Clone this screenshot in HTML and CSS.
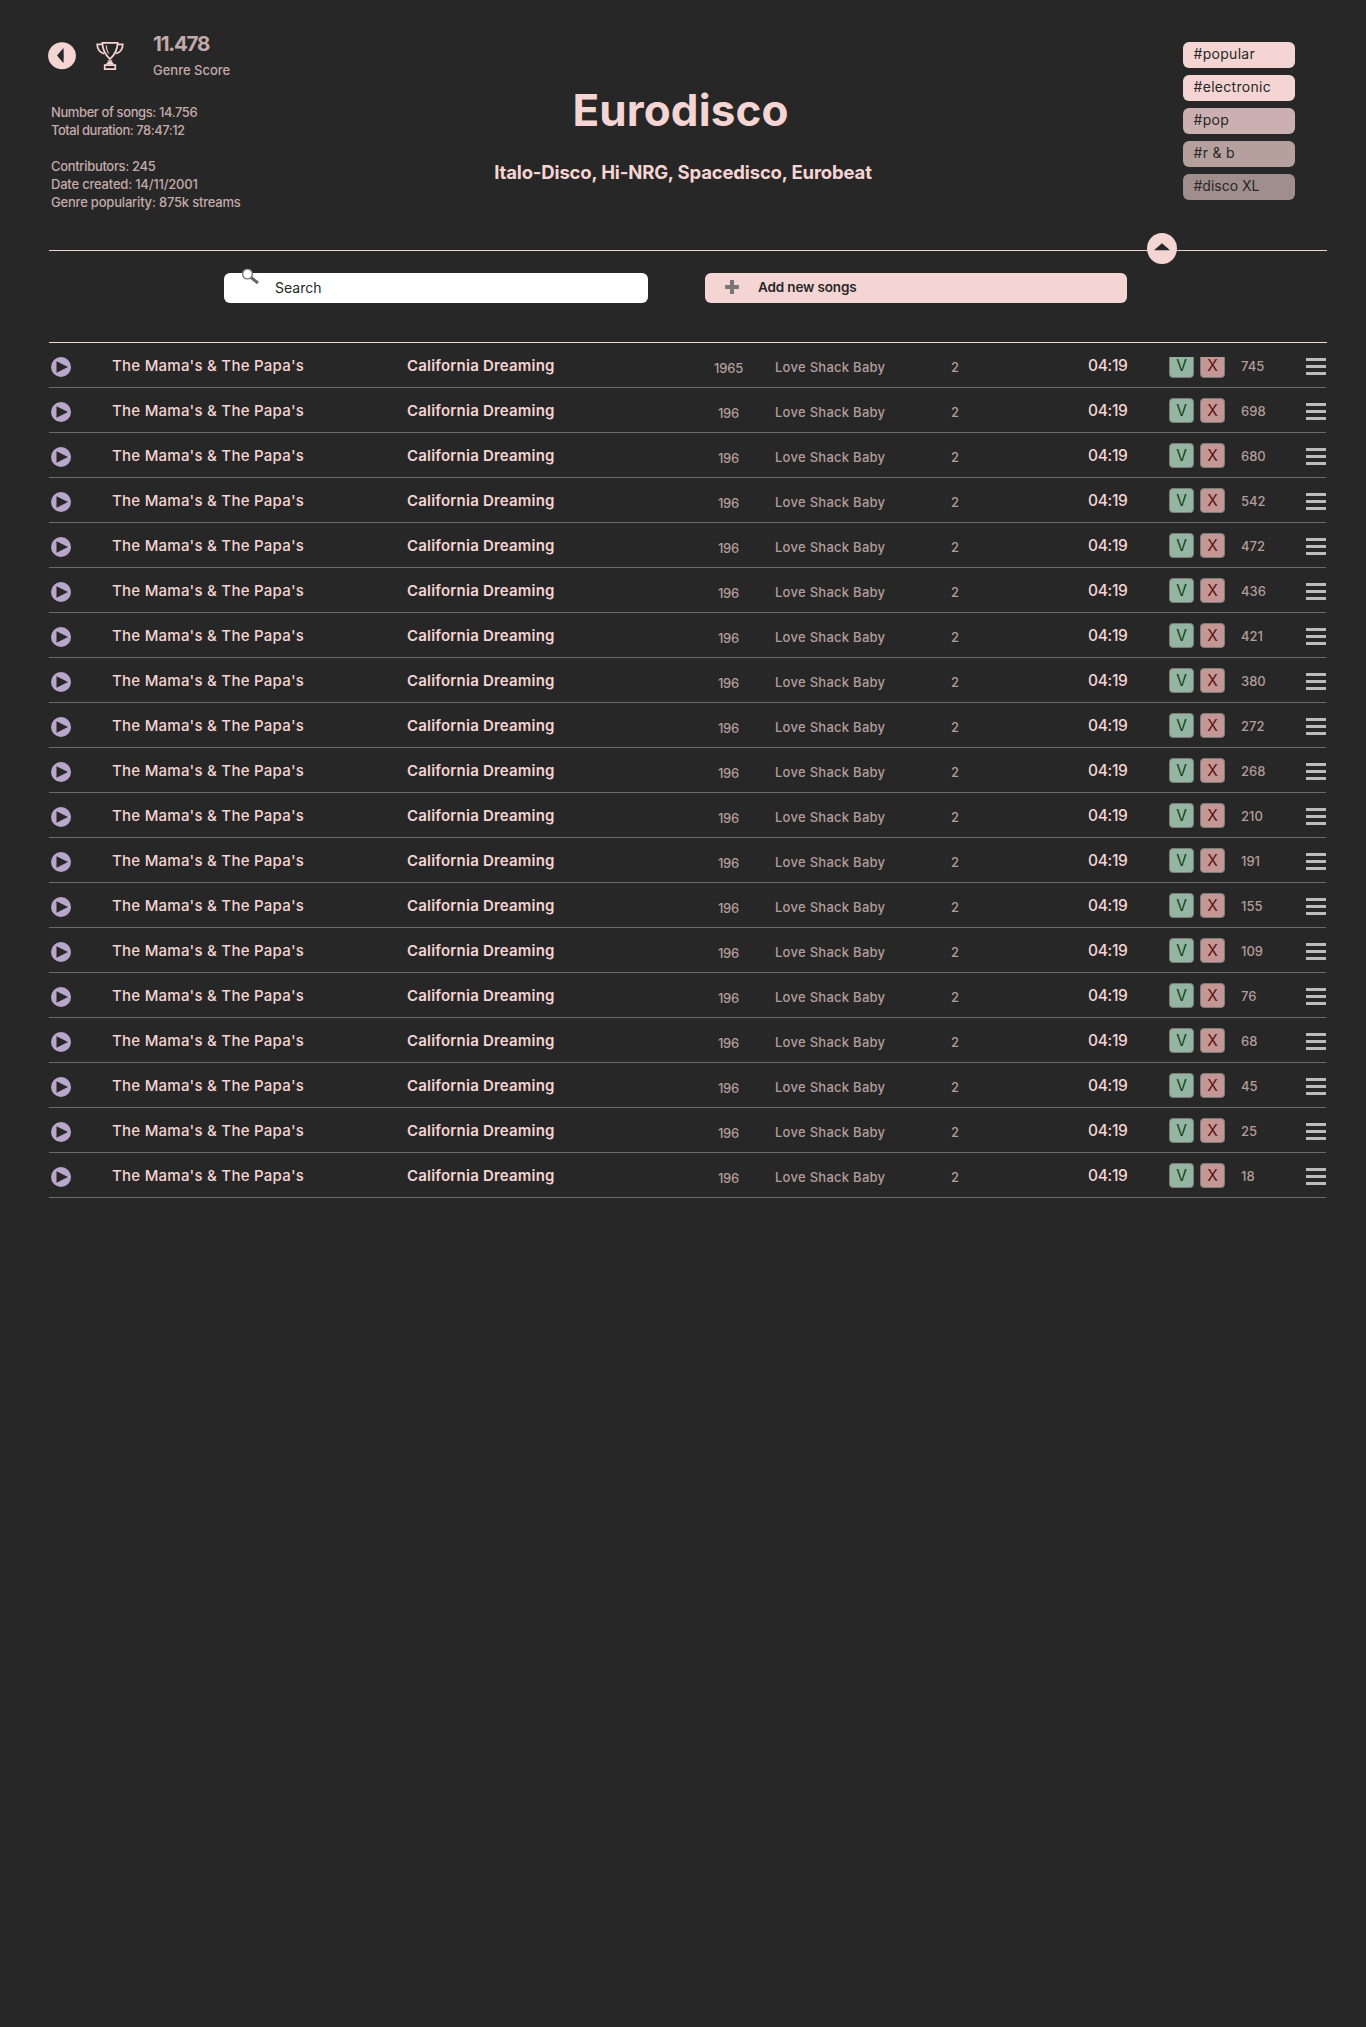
FILE: index.html
```html
<!DOCTYPE html>
<html lang="en">
<head>
<meta charset="utf-8">
<title>Eurodisco</title>
<link rel="stylesheet" href="styles.css">
</head>
<body>
<header class="hero">
  <div class="hero-info">
    <div class="hero-top">
      <svg class="back" viewBox="0 0 28 28"><ellipse cx="14" cy="13.700" rx="13.900" ry="13.500" fill="#f5d5d3"/><path d="M9 13.500 15.500 6q.5 7.500 0 15.300Z" fill="#272727"/></svg>
      <svg class="trophy" viewBox="0 0 28 30" fill="none" stroke="#f5d5d3" stroke-width="1.700"><path d="M6.300 1.900H21.700Q21.300 11.500 14 18.200Q6.700 11.500 6.300 1.900Z"/><path d="M6.500 3.400H1.200Q1.400 10.500 8.300 12.800M21.500 3.400H26.800Q26.600 10.500 19.700 12.800"/><path d="M10.200 4.500Q10.300 9 12.600 12.500" stroke-width="1.100"/><path d="M11.800 20h4.400" stroke-width="1.500"/><path d="M8.600 23.500Q11 23 12 20.800h4Q17 23 19.400 23.500Z" fill="#f5d5d3" stroke="none"/><path d="M8.700 24.100h10.600v4.100H8.700Z"/></svg>
      <div class="score"><strong class="score-value">11.478</strong><span class="score-label">Genre Score</span></div>
    </div>
    <div class="facts">
      <p class="songs-total">Number of songs: 14.756</p>
      <p class="duration">Total duration: 78:47:12</p>
      <p class="contributors">Contributors: 245</p>
      <p class="created">Date created: 14/11/2001</p>
      <p class="popularity">Genre popularity: 875k streams</p>
    </div>
  </div>
  <div class="hero-title">
    <h1>Eurodisco</h1>
    <h2>Italo-Disco, Hi-NRG, Spacedisco, Eurobeat</h2>
  </div>
  <nav class="tags">
    <a class="tag">#popular</a>
    <a class="tag">#electronic</a>
    <a class="tag tag-pop">#pop</a>
    <a class="tag tag-rnb">#r &amp; b</a>
    <a class="tag tag-disco">#disco XL</a>
  </nav>
  <svg class="collapse" viewBox="0 0 30 31"><ellipse cx="15" cy="15.500" rx="15" ry="15.500" fill="#f5d5d3"/><path d="M7 17.200 15 10.200 23 17.200Z" fill="#272727"/></svg>
</header>
<section class="tools">
  <label class="box search"><svg class="lens" viewBox="0 0 18 18"><path d="M9 9.500 16 15" stroke="#666" stroke-width="3"/><circle cx="5.500" cy="6" r="4.900" fill="#fff" stroke="#777" stroke-width="1.400"/></svg><span>Search</span></label>
  <button class="box add"><svg class="plus" viewBox="0 0 14 14"><path d="M7 0v14M0 7h14" stroke="#777" stroke-width="4"/></svg><span>Add new songs</span></button>
</section>
<main class="songs" id="songs"></main>
<script src="songs.js"></script>
</body>
</html>
```
FILE: songs.js
```js
const votes = [745, 698, 680, 542, 472, 436, 421, 380, 272, 268, 210, 191, 155, 109, 76, 68, 45, 25, 18];

document.getElementById("songs").innerHTML = votes.map((count, i) => `
  <article class="song">
    <svg class="play" viewBox="0 0 20 20"><circle cx="10" cy="10" r="10" fill="#b9a7cb"/><path d="M5.500 4.200V15.800L17 10Z" fill="#272727"/></svg>
    <span class="artist">The Mama's &amp; The Papa's</span>
    <span class="title">California Dreaming</span>
    <span class="year">${i ? "196" : "1965"}</span>
    <span class="label">Love Shack Baby</span>
    <span class="plays">2</span>
    <span class="time">04:19</span>
    <div class="vote"><b class="btn up">V</b><b class="btn down">X</b></div>
    <span class="count">${count}</span>
    <div class="menu"><i></i><i></i><i></i></div>
  </article>`).join("");
```
FILE: styles.css
```css
* { box-sizing: border-box; }
body {
  margin: 0;
  min-height: 2027px;
  background: #272727;
  color: #f5d5d3;
  font-family: Inter, "Liberation Sans", sans-serif;
}
h1, h2, p { margin: 0; }
.hero {
  position: relative;
  display: grid;
  grid-template-columns: 425px 418px 1fr;
  height: 251px;
  margin: 0 39px 0 49px;
  border-bottom: 1px solid #f5d5d3;
}
.hero-info { color: #c4abaa; font-weight: 500; }
.hero-top { display: flex; height: 100px; margin-left: -1px; }
.back { width: 28px; height: 28px; margin-top: 42px; }
.trophy { width: 28px; height: 30px; margin: 41px 0 0 20px; }
.score { display: flex; flex-direction: column; align-items: flex-start; margin: 32px 0 0 29px; }
.score-value { font-size: 20.500px; line-height: 24px; letter-spacing: -1.200px; }
.score-label { margin-top: 5px; font-size: 13px; line-height: 18px; }
.facts { padding: 3px 0 0 2px; font-size: 13px; line-height: 18px; white-space: nowrap; }
.songs-total { letter-spacing: -0.400px; }
.duration { letter-spacing: -0.480px; }
.contributors { margin-top: 18px; letter-spacing: -0.320px; }
.created, .popularity { letter-spacing: -0.200px; }
.hero-title { display: flex; flex-direction: column; align-items: center; white-space: nowrap; padding-top: 84px; }
h1 { padding-right: 5px; font-size: 44px; line-height: 52px; font-weight: 700; letter-spacing: 0.100px; }
h2 { margin-top: 24px; font-size: 18.500px; line-height: 24px; font-weight: 700; letter-spacing: -0.160px; }
.tags { display: flex; flex-direction: column; gap: 7px; padding: 42px 0 0 291px; }
.tag {
  width: 112px;
  height: 26px;
  padding-left: 10.500px;
  border-radius: 6px;
  background: #f5d5d3;
  color: #272727;
  font-size: 14px;
  line-height: 24px;
  letter-spacing: 0.300px;
}
.tag-pop { background: #ccb0b1; }
.tag-rnb { background: #b5a09e; }
.tag-disco { background: #a08e8d; letter-spacing: 0; }
.collapse { position: absolute; left: 1098px; top: 233px; width: 30px; height: 31px; }
.tools { display: flex; gap: 57px; padding: 22px 0 0 224px; height: 91px; }
.box {
  display: flex;
  align-items: center;
  height: 30px;
  border: 0;
  border-radius: 6px;
  color: #272727;
  font-family: inherit;
  font-size: 14px;
}
.box span { margin-top: -2px; }
.search { width: 424px; background: #fff; }
.lens { width: 18px; height: 18px; margin: -23px 15px 0 18px; }
.add { width: 422px; padding: 0; background: #f5d5d3; font-size: 13.500px; font-weight: 600; letter-spacing: -0.150px; }
.plus { width: 14px; height: 14px; margin: -2px 19px 0 20px; }
.songs { margin: 0 39px 0 49px; border-top: 1px solid #f8d8cd; }
.song {
  display: grid;
  grid-template-columns: 63px 295px 285px 83px 175px 138px 81px 72px 65px 20px;
  height: 45px;
  margin-right: 1px;
  border-bottom: 1px solid #6b6b6b;
}
.song > span { padding-top: 14px; line-height: 18px; white-space: nowrap; }
.play { width: 20px; height: 20px; margin: 14px 0 0 2px; }
.artist { font-size: 15px; font-weight: 500; letter-spacing: 0.250px; }
.title { font-size: 15px; font-weight: 600; letter-spacing: 0.200px; }
.year, .label, .plays, .count { color: #b39d9b; font-size: 13px; font-weight: 500; }
.song > .year { padding: 16px 10px 0 0; text-align: center; letter-spacing: -0.200px; }
.song > .label { padding-top: 15px; letter-spacing: 0.270px; }
.song > .plays { padding: 15px 0 0 1px; }
.time { font-size: 15.500px; font-weight: 500; letter-spacing: -0.300px; }
.vote { display: flex; gap: 6px; padding-top: 10px; }
.btn {
  width: 25px;
  height: 25px;
  border: 1px solid #7d7d78;
  border-radius: 4px;
  font-size: 15.500px;
  font-weight: 400;
  line-height: 24px;
  text-align: center;
}
.up { background: #94b5a1; color: #143d1c; }
.down { background: #c39795; color: #5c0e10; }
.song:first-child .btn { clip-path: inset(4px 0 0 0); }
.menu { display: flex; flex-direction: column; gap: 4px; padding-top: 15px; }
.menu i { height: 3px; background: #bcbcbc; }
```
